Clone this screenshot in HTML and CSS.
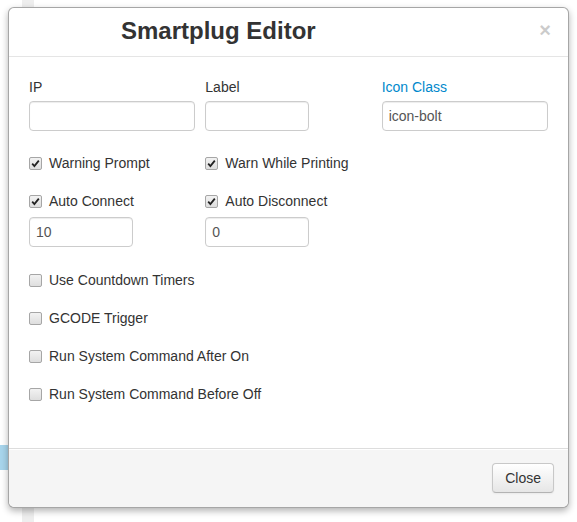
FILE: index.html
```html
<!DOCTYPE html>
<html>
<head>
<meta charset="utf-8">
<title>Smartplug Editor</title>
<link rel="stylesheet" href="styles.css">
</head>
<body>
<div class="page">
  <div class="tab"></div>
  <div class="strip"></div>
</div>
<div class="modal">
  <div class="modal-header">
    <h3 class="title">Smartplug Editor</h3>
    <span class="close">&times;</span>
  </div>
  <div class="modal-body">
    <div class="grid">
      <div class="field">
        <label class="lbl">IP</label>
        <input class="txt" type="text" value="">
      </div>
      <div class="field">
        <label class="lbl">Label</label>
        <input class="txt short" type="text" value="">
      </div>
      <div class="field">
        <label class="lbl link">Icon Class</label>
        <input class="txt" type="text" value="icon-bolt">
      </div>
    </div>
    <div class="grid row-a">
      <label class="check"><span class="box"><svg width="9" height="9" viewBox="0 0 9 9"><path d="M1.2 4.6 L3.4 7 L7.8 1.6" fill="none" stroke="#222" stroke-width="1.8"/></svg></span>Warning Prompt</label>
      <label class="check"><span class="box"><svg width="9" height="9" viewBox="0 0 9 9"><path d="M1.2 4.6 L3.4 7 L7.8 1.6" fill="none" stroke="#222" stroke-width="1.8"/></svg></span>Warn While Printing</label>
    </div>
    <div class="grid row-b">
      <div class="field">
        <label class="check"><span class="box"><svg width="9" height="9" viewBox="0 0 9 9"><path d="M1.2 4.6 L3.4 7 L7.8 1.6" fill="none" stroke="#222" stroke-width="1.8"/></svg></span>Auto Connect</label>
        <input class="txt short" type="text" value="10">
      </div>
      <div class="field">
        <label class="check"><span class="box"><svg width="9" height="9" viewBox="0 0 9 9"><path d="M1.2 4.6 L3.4 7 L7.8 1.6" fill="none" stroke="#222" stroke-width="1.8"/></svg></span>Auto Disconnect</label>
        <input class="txt short" type="text" value="0">
      </div>
    </div>
    <div class="list">
      <label class="check"><span class="box"></span>Use Countdown Timers</label>
      <label class="check"><span class="box"></span>GCODE Trigger</label>
      <label class="check"><span class="box"></span>Run System Command After On</label>
      <label class="check"><span class="box"></span>Run System Command Before Off</label>
    </div>
  </div>
  <div class="modal-footer">
    <button class="btn">Close</button>
  </div>
</div>
</body>
</html>
```
FILE: styles.css
```css
html, body {
  margin: 0;
  padding: 0;
  background: #fff;
  font-family: "Liberation Sans", Arial, sans-serif;
  font-size: 14px;
  line-height: 20px;
  color: #333;
}
.page {
  display: flex;
  height: 522px;
  overflow: hidden;
}
.tab {
  width: 8px;
  height: 25px;
  margin-top: 445px;
  background: #a8d5ec;
}
.strip {
  width: 12px;
  margin-left: 14px;
  background: #eeeeee;
}
.modal {
  position: absolute;
  top: 7px;
  left: 8px;
  width: 559px;
  height: 499px;
  background: #fff;
  border: 1px solid rgba(0,0,0,0.35);
  border-radius: 6px;
  box-shadow: 0 3px 7px rgba(0,0,0,0.3);
  display: flex;
  flex-direction: column;
}
.modal-header {
  height: 48px;
  border-bottom: 1px solid #e5e5e5;
  padding: 0 15px 0 112px;
  display: flex;
  align-items: center;
  justify-content: space-between;
}
.title {
  margin: -3px 0 0 0;
  font-size: 24px;
  font-weight: bold;
  line-height: 30px;
  color: #333;
}
.close {
  font-size: 20px;
  font-weight: bold;
  line-height: 20px;
  color: #000;
  opacity: 0.2;
  text-shadow: 0 1px 0 #fff;
  margin-right: 2px;
  margin-top: -4px;
}
.modal-body {
  flex: 1;
  padding: 20px 20px 0 20px;
}
.grid {
  display: grid;
  grid-template-columns: 1fr 1fr 1fr;
  column-gap: 10px;
}
.field {
  display: flex;
  flex-direction: column;
  align-items: flex-start;
}
.lbl {
  display: block;
  line-height: 20px;
  margin-bottom: 4px;
}
.link {
  color: #0088cc;
}
.txt {
  box-sizing: border-box;
  width: 100%;
  height: 30px;
  padding: 4px 6px;
  border: 1px solid #cccccc;
  border-radius: 4px;
  font-family: "Liberation Sans", Arial, sans-serif;
  font-size: 14px;
  line-height: 20px;
  color: #555;
  box-shadow: inset 0 1px 1px rgba(0,0,0,0.075);
  margin: 0;
  outline: none;
}
.txt.short {
  width: 104px;
}
.row-a {
  margin-top: 22px;
}
.row-b {
  margin-top: 18px;
}
.row-b .check {
  margin-bottom: 6px;
}
.check {
  display: flex;
  align-items: center;
  line-height: 20px;
  height: 20px;
  color: #333;
}
.box {
  box-sizing: border-box;
  width: 13px;
  height: 13px;
  margin-right: 7px;
  margin-top: 1px;
  border: 1px solid #a6a6a6;
  border-radius: 2px;
  background: linear-gradient(#f2f2f2, #dedede);
  display: flex;
  align-items: center;
  justify-content: center;
}
.list {
  margin-top: 23px;
  display: flex;
  flex-direction: column;
  gap: 18px;
}
.modal-footer {
  height: 59px;
  box-sizing: border-box;
  padding: 14px 14px 0 15px;
  border-top: 1px solid #dddddd;
  background: #f5f5f5;
  border-radius: 0 0 6px 6px;
  box-shadow: inset 0 1px 0 #fff;
  display: flex;
  justify-content: flex-end;
  align-items: flex-start;
}
.btn {
  height: 30px;
  padding: 4px 12px;
  font-family: "Liberation Sans", Arial, sans-serif;
  font-size: 14px;
  line-height: 20px;
  color: #333;
  background: linear-gradient(#ffffff, #e6e6e6);
  border: 1px solid #c8c8c8;
  border-bottom-color: #b3b3b3;
  border-radius: 4px;
  box-shadow: inset 0 1px 0 rgba(255,255,255,0.2), 0 1px 2px rgba(0,0,0,0.05);
}
```
